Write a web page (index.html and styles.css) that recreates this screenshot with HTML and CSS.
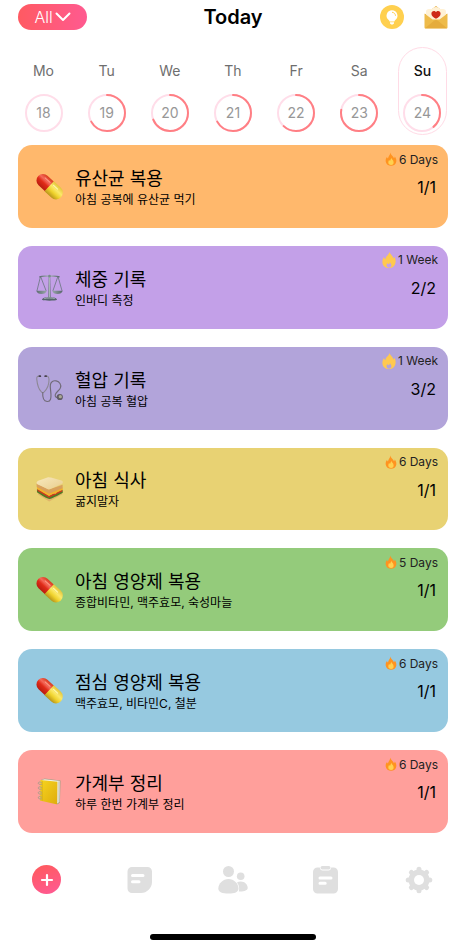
FILE: index.html
```html
<!DOCTYPE html>
<html lang="ko">
<head>
    <meta charset="UTF-8">
    <meta name="viewport" content="width=device-width, initial-scale=1.0">
    <title>Today</title>
    <link rel="stylesheet" href="styles.css">
</head>
<body>

<!-- shared icons -->
<svg class="sprite" aria-hidden="true">
    <defs>
        <linearGradient id="pillRed" x1="0" y1="0" x2="0" y2="1">
            <stop offset="0" stop-color="#d93a1c"/>
            <stop offset="0.35" stop-color="#f4695a"/>
            <stop offset="0.6" stop-color="#e02b18"/>
            <stop offset="1" stop-color="#b81c10"/>
        </linearGradient>
        <linearGradient id="pillYellow" x1="0" y1="0" x2="0" y2="1">
            <stop offset="0" stop-color="#e3c63c"/>
            <stop offset="0.35" stop-color="#fbe96a"/>
            <stop offset="0.65" stop-color="#efd22c"/>
            <stop offset="1" stop-color="#b8941a"/>
        </linearGradient>
        <linearGradient id="metal" x1="0" y1="0" x2="1" y2="0">
            <stop offset="0" stop-color="#5d6b70"/>
            <stop offset="0.5" stop-color="#a9b8b8"/>
            <stop offset="1" stop-color="#56646a"/>
        </linearGradient>
        <linearGradient id="bread" x1="0" y1="0" x2="1" y2="1">
            <stop offset="0" stop-color="#f8e9bd"/>
            <stop offset="1" stop-color="#e9cd8e"/>
        </linearGradient>
        <linearGradient id="cover" x1="0" y1="0" x2="1" y2="1">
            <stop offset="0" stop-color="#f6d51f"/>
            <stop offset="1" stop-color="#dfac0c"/>
        </linearGradient>
    </defs>
    <symbol id="pill" viewBox="0 0 28 28">
        <g transform="rotate(43 14 14)">
            <path d="M14 7.200H4.800a6.800 6.800 0 0 0 0 13.600H14z" fill="url(#pillRed)"/>
            <path d="M13.500 6.900h9.700a7.100 7.100 0 0 1 0 14.200h-9.700z" fill="url(#pillYellow)"/>
            <path d="M4.500 10.500h7" stroke="#ff9a88" stroke-width="1" stroke-linecap="round"/>
            <path d="M16 10.300h6" stroke="#fff8b4" stroke-width="1" stroke-linecap="round"/>
        </g>
    </symbol>
    <symbol id="flame" viewBox="0 0 12 14">
        <path d="M5.300.5c.4 2.800 2.900 3.400 3.700 5.700.5-.5.7-1 .8-1.700 1.300 1.600 1.700 3.300 1.500 4.900-.3 2.600-2.500 4.400-5.200 4.400S1 12 .7 9.400c-.2-2 .5-3.300 1.300-4.400.2.700.5 1.200 1 1.500C3.200 4.100 5.400 3 5.300.5z" fill="#ff9320"/>
        <path d="M6.400 5.800c.1 1.500 1.900 2.200 2.200 4.100.3 1.800-.8 3-2.500 3s-2.900-1-2.800-2.700c.1-1 .5-1.600.9-2.100.2.5.4.8.9 1 .1-1.300.9-1.900 1.300-3.300z" fill="#ffd150"/>
    </symbol>
    <symbol id="flameBig" viewBox="0 0 14 17">
        <path fill-rule="evenodd" d="M7.600.3c.3 2.600 3.300 3.600 3.700 6.600.6-.3.9-.9 1-1.700 1.100 1.500 1.500 3.500 1.300 5.300-.3 3.700-3.200 6.200-6.700 6.200S.6 14.600.4 11.100C.3 8.900.900 7 2 5.600c.2 1 .6 1.800 1.500 2.100C3.400 4.400 7.100 3.600 7.600.3zM8 10.800c-.1.900-.7 1.500-1.300 2-.7-.1-1-.6-1.100-1.200-.8.8-1.200 1.700-1 2.700.2 1.200 1.100 1.900 2.400 1.900s2.300-.8 2.400-2.100c.1-1.400-.9-2.100-1.400-3.300z" fill="#ffc94f"/>
    </symbol>
</svg>

<header>
    <button class="filter-btn" type="button">All
        <svg width="16" height="10" viewBox="0 0 16 10" fill="none" stroke="#fff" stroke-width="2" stroke-linecap="round" stroke-linejoin="round" aria-hidden="true"><path d="M1.500 1.500 8 8l6.500-6.500"/></svg>
    </button>
    <h1>Today</h1>
    <div class="header-icons">
        <button class="icon-btn" type="button" aria-label="Tips">
            <svg width="24" height="24" viewBox="0 0 24 24">
                <circle cx="12" cy="12" r="12" fill="#ffd04f"/>
                <path d="M12 5.300a5.400 5.400 0 0 0-3.300 9.700c.6.500.8.900.9 1.500h4.800c.1-.6.3-1 .9-1.500A5.400 5.400 0 0 0 12 5.300z" fill="#fff"/>
                <path d="M10 17.300h4v1.200l-1.200 1.100h-1.600L10 18.500z" fill="#fff"/>
                <path d="M12.400 7.300c1.700.2 2.900 1.400 3.100 3.100" fill="none" stroke="#ffd04f" stroke-width="1" stroke-linecap="round"/>
            </svg>
        </button>
        <button class="icon-btn" type="button" aria-label="Messages">
            <svg width="24" height="24" viewBox="0 0 24 24">
                <path d="M1 9.500 12 1l11 8.500V13H1z" fill="#e3a936"/>
                <path d="M2 6.500c0-1.500 1.200-2.500 3-2.500h3C9 2.700 10.300 2 12 2s3 .7 4 2h3c1.800 0 3 1 3 2.500V13l-10 5-10-5z" fill="#fff1d5"/>
                <path d="M12 13.700c-2.700-1.300-4.600-2.900-4.600-5C7.400 7 8.500 6 9.900 6c.9 0 1.700.4 2.100 1.100.4-.7 1.200-1.100 2.100-1.100 1.400 0 2.500 1 2.500 2.700 0 2.100-1.900 3.700-4.600 5z" fill="#ce2b18"/>
                <path d="M.5 8.500 8.500 14.500h7l8-6V22.500a1 1 0 0 1-1 1h-21a1 1 0 0 1-1-1z" fill="#eebb4a"/>
                <path d="m1 23.200 9-7.500c1.300-1 2.700-1 4 0l9 7.500z" fill="#e5ac3c"/>
            </svg>
        </button>
    </div>
</header>

<div class="week" id="week"></div>

<ul class="habits">
    <li class="habit orange">
        <svg class="habit-icon" viewBox="0 0 28 28"><use href="#pill"/></svg>
        <div class="habit-text">
            <h2>유산균 복용</h2>
            <p>아침 공복에 유산균 먹기</p>
        </div>
        <div class="habit-status">
            <span class="streak"><svg class="flame" viewBox="0 0 12 14"><use href="#flame"/></svg>6 Days</span>
            <span class="count">1/1</span>
        </div>
    </li>
    <li class="habit violet">
        <svg class="habit-icon" viewBox="0 0 28 28" fill="none">
            <path d="M4.500 3.200 1 17.500M5 3.200l5.500 14.300M22.500 3.200 17.500 17.500M23 3.200l4 14.300" stroke="#66747a" stroke-width=".8"/>
            <path d="M4 3c3-1.300 6-.4 9.700-.8C17.500 2.600 20.500 1.700 24 3" stroke="url(#metal)" stroke-width="1.300" stroke-linecap="round"/>
            <path d="M13.200 2h1.500l.5 23h-2.500z" fill="url(#metal)"/>
            <circle cx="14" cy="2.200" r="1.400" fill="#78888d"/>
            <path d="M.3 17.300h10.900c-.5 2-2.700 3.500-5.500 3.500S.8 19.300.3 17.300zM16.800 17.300h10.900c-.5 2-2.700 3.500-5.400 3.500-2.800 0-5-1.500-5.500-3.500z" fill="url(#metal)"/>
            <path d="M6.200 26.800c0-1.900 3.300-2.700 7.800-2.700s7.800.8 7.800 2.700c-2 1.200-13.600 1.200-15.600 0z" fill="#55646a"/>
            <path d="M8.500 25.400c3-.7 8-.7 11 0" stroke="#b7c4c6" stroke-width=".8"/>
        </svg>
        <div class="habit-text">
            <h2>체중 기록</h2>
            <p>인바디 측정</p>
        </div>
        <div class="habit-status">
            <span class="streak"><svg class="flame-big" viewBox="0 0 14 17"><use href="#flameBig"/></svg>1 Week</span>
            <span class="count">2/2</span>
        </div>
    </li>
    <li class="habit lavender">
        <svg class="habit-icon" viewBox="0 0 28 28" fill="none" stroke-linecap="round">
            <path d="M4 1.200C1.500.5.500 2 .8 4.500c.5 5 1 9.500 4.800 13 .9.900 2 .9 2.900 0 3.700-3.500 5-8 5-12.500 0-2.700-1-4.300-3.500-3.800" stroke="#8c8794" stroke-width="1.100"/>
            <path d="M7 18.300c-.3 4.500 1 8.800 4.500 9.200 4 .4 4.200-4 4-7.500-.3-5-1-7.500-.6-10 .5-3 3-4.600 6-3.900 3.600.8 5.500 4 4.500 7-.9 2.700-4.200 4.200-5.300 7-.6 1.700.3 3.400 2.400 3.400" stroke="#716b78" stroke-width="1.200"/>
            <path d="M3.500 1.200h1M9.500 1.200h1" stroke="#47414f" stroke-width="1.800"/>
            <circle cx="24.700" cy="22.800" r="3.200" fill="#5f5b63"/>
            <circle cx="25.200" cy="22.500" r="1.700" fill="#aaa897"/>
        </svg>
        <div class="habit-text">
            <h2>혈압 기록</h2>
            <p>아침 공복 혈압</p>
        </div>
        <div class="habit-status">
            <span class="streak"><svg class="flame-big" viewBox="0 0 14 17"><use href="#flameBig"/></svg>1 Week</span>
            <span class="count">3/2</span>
        </div>
    </li>
    <li class="habit yellow">
        <svg class="habit-icon" viewBox="0 0 28 28">
            <path d="m1.500 17 12 7.500L27.300 17v3l-13.600 7.500L2.500 20.500z" fill="#e0b469"/>
            <path d="M1 14.500 13.500 21.500 27.500 15.500l.3 2.800c-3 1.500-9.800 5.700-14.100 6.700C9 23.500 4.700 20.500 1 18z" fill="#4d7c26"/>
            <path d="m1.500 14 12 7.500L27.300 15v2l-13.800 6.500L1.500 16.500z" fill="#c93c20"/>
            <path d="m1 12 12.500 6.700L27.700 13v2.200l-6 3-1.700 1.600-1.500-.6-5 2.500L1 14.500z" fill="#f3b32b"/>
            <path d="M.5 8.500 13.200 15 27.600 10v3.700l-14.100 5.800L.8 12.500z" fill="#d9a05b"/>
            <path d="M.8 7.500c.5-1 1.700-1.500 3-2L12.500 2.400c1.200-.4 2 0 3 .3l10.900 2.900c1.700.5 2 2.700.7 3.400l-12.200 5.500c-1.300.6-2.400.4-3.500-.2L1.400 9.700C.6 9.200.4 8.300.8 7.500z" fill="url(#bread)"/>
        </svg>
        <div class="habit-text">
            <h2>아침 식사</h2>
            <p>굶지말자</p>
        </div>
        <div class="habit-status">
            <span class="streak"><svg class="flame" viewBox="0 0 12 14"><use href="#flame"/></svg>6 Days</span>
            <span class="count">1/1</span>
        </div>
    </li>
    <li class="habit green">
        <svg class="habit-icon" viewBox="0 0 28 28"><use href="#pill"/></svg>
        <div class="habit-text">
            <h2>아침 영양제 복용</h2>
            <p>종합비타민, 맥주효모, 숙성마늘</p>
        </div>
        <div class="habit-status">
            <span class="streak"><svg class="flame" viewBox="0 0 12 14"><use href="#flame"/></svg>5 Days</span>
            <span class="count">1/1</span>
        </div>
    </li>
    <li class="habit blue">
        <svg class="habit-icon" viewBox="0 0 28 28"><use href="#pill"/></svg>
        <div class="habit-text">
            <h2>점심 영양제 복용</h2>
            <p>맥주효모, 비타민C, 철분</p>
        </div>
        <div class="habit-status">
            <span class="streak"><svg class="flame" viewBox="0 0 12 14"><use href="#flame"/></svg>6 Days</span>
            <span class="count">1/1</span>
        </div>
    </li>
    <li class="habit pink">
        <svg class="habit-icon" viewBox="0 0 28 28">
            <path d="m5 2 4-1.400 16.500 2-.7 22.700-2.500 2.200z" fill="#a8a489"/>
            <path d="m6 2 3-.7 15.700 1.900-.5 21.500-2 1.700z" fill="#f1efe2"/>
            <path d="m23.300 3.500-.6 22M24.300 3.200l-.6 21.500" stroke="#b9b6a5" stroke-width=".5"/>
            <path d="M4.500 2 22.200 4l-.3 22.700c0 .5-.4.700-.9.600L5 23.700c-.6-.1-.8-.5-.8-1z" fill="url(#cover)"/>
            <path d="M6.500 3v20.500" stroke="#c99f10" stroke-width=".5"/>
            <path d="M6 5c-2-1.600-4-.7-3.600.7.300 1 2 1.100 3.600.9M6 10c-2-1.600-4-.7-3.600.7.300 1 2 1.100 3.600.9M6 15c-2-1.600-4-.7-3.600.7.300 1 2 1.100 3.600.9M6 20c-2-1.600-4-.7-3.600.7.300 1 2 1.100 3.600.9" fill="none" stroke="#a89c88" stroke-width="1"/>
        </svg>
        <div class="habit-text">
            <h2>가계부 정리</h2>
            <p>하루 한번 가계부 정리</p>
        </div>
        <div class="habit-status">
            <span class="streak"><svg class="flame" viewBox="0 0 12 14"><use href="#flame"/></svg>6 Days</span>
            <span class="count">1/1</span>
        </div>
    </li>
</ul>

<footer>
    <nav class="tabs">
        <button class="tab" type="button" aria-label="Add habit">
            <span class="add"><svg width="14" height="14" viewBox="0 0 14 14" stroke="#fff" stroke-width="2.200" stroke-linecap="round"><path d="M7 2v10M2 7h10"/></svg></span>
        </button>
        <button class="tab" type="button" aria-label="Notes">
            <svg width="30" height="30" viewBox="0 0 30 30" fill="#dfdfdf">
                <path d="M7 2h15.500A4.500 4.500 0 0 1 27 6.500V17c0 6-5 11-11 11H7a4.500 4.500 0 0 1-4.500-4.500v-17A4.500 4.500 0 0 1 7 2z"/>
                <path d="M7.500 10.600h10.500M7.500 16.800H14" stroke="#fff" stroke-width="3" stroke-linecap="round"/>
            </svg>
        </button>
        <button class="tab" type="button" aria-label="Friends">
            <svg width="30" height="30" viewBox="0 0 30 30" fill="#dfdfdf">
                <circle cx="10.500" cy="6.500" r="5.500"/>
                <path d="M.3 23.500C.3 18.500 5 14 10.500 14s10 4.500 10 9.500c0 3.700-4 5-10 5S.3 27.200.3 23.500z"/>
                <circle cx="22.700" cy="11.300" r="3.800"/>
                <path d="M19 17.500c1-.7 2.300-1 3.700-1 4 0 7 3 7 6.300 0 2.600-3 3.700-7.500 3.700-.5 0-1 0-1.400-.1.900-3 .3-6.300-1.800-8.900z"/>
            </svg>
        </button>
        <button class="tab" type="button" aria-label="Records">
            <svg width="30" height="30" viewBox="0 0 30 30" fill="#dfdfdf">
                <path d="M6.500 2.500h2.300C9 4.600 10.100 5.500 11.500 5.500h6c1.400 0 2.500-.9 2.700-3h2.300A4.500 4.500 0 0 1 27 7v17a4.500 4.500 0 0 1-4.500 4.500h-16A4.500 4.500 0 0 1 2 24V7a4.500 4.500 0 0 1 4.500-4.500z"/>
                <rect x="9.500" y="1" width="10" height="3.400" rx="1.700"/>
                <path d="M9 13h11M9 18.300h5.200" stroke="#fff" stroke-width="3" stroke-linecap="round"/>
            </svg>
        </button>
        <button class="tab" type="button" aria-label="Settings">
            <svg width="30" height="30" viewBox="0 0 30 30">
                <g stroke="#dfdfdf" stroke-width="5" stroke-linecap="round">
                    <path d="M15 4.200v21.600M4.200 15h21.600M7.400 7.400l15.200 15.200M22.600 7.400 7.400 22.600"/>
                </g>
                <circle cx="15" cy="15" r="10.500" fill="#dfdfdf"/>
                <circle cx="15" cy="15" r="5" fill="#fff"/>
            </svg>
        </button>
    </nav>
    <div class="home-bar"></div>
</footer>

<script>
const days = [
    { name: "Mo", date: 18, done: 0 },
    { name: "Tu", date: 19, done: 67 },
    { name: "We", date: 20, done: 69 },
    { name: "Th", date: 21, done: 67 },
    { name: "Fr", date: 22, done: 62 },
    { name: "Sa", date: 23, done: 78 },
    { name: "Su", date: 24, done: 39 }
];
const today = 24;

const week = document.getElementById("week");
days.forEach((day) => {
    const btn = document.createElement("button");
    btn.type = "button";
    btn.className = day.date === today ? "day selected" : "day";
    const arc = day.done > 0
        ? `<circle class="arc" cx="19" cy="19" r="18" pathLength="100" stroke-dasharray="${day.done} 100"/>`
        : "";
    btn.innerHTML = `
        <span class="day-name">${day.name}</span>
        <span class="ring">
            <svg viewBox="0 0 38 38"><circle class="track" cx="19" cy="19" r="18"/>${arc}</svg>
            <span class="date">${day.date}</span>
        </span>`;
    week.appendChild(btn);
});
</script>

</body>
</html>
```
FILE: styles.css
```css
* {
    box-sizing: border-box;
}
body {
    font-family: Inter, "Noto Sans CJK KR", sans-serif;
    background-color: #fff;
    color: #000;
    margin: 0;
    min-height: 100vh;
    display: flex;
    flex-direction: column;
}
button {
    font-family: inherit;
    background: none;
    border: none;
    padding: 0;
    cursor: pointer;
}
svg {
    display: block;
    flex-shrink: 0;
    overflow: visible;
}
h1, h2, p {
    margin: 0;
}
.sprite {
    position: absolute;
    width: 0;
    height: 0;
}
header {
    display: grid;
    grid-template-columns: 1fr auto 1fr;
    align-items: center;
    height: 34px;
    padding: 0 18px;
}
.filter-btn {
    display: flex;
    align-items: center;
    justify-content: center;
    gap: 2px;
    justify-self: start;
    width: 69px;
    height: 26px;
    border-radius: 13px;
    background: linear-gradient(90deg, #ff5a62, #ff5a90);
    color: #fff;
    font-size: 16px;
    font-weight: 300;
}
h1 {
    font-size: 20px;
    font-weight: 600;
}
.header-icons {
    display: flex;
    justify-content: flex-end;
    gap: 20px;
}
.week {
    display: flex;
    justify-content: space-between;
    margin: 13px 19px 10px;
}
.day {
    display: flex;
    flex-direction: column;
    align-items: center;
    gap: 13px;
    width: 49px;
    height: 88px;
    padding-top: 13px;
    border: 1px solid transparent;
    border-radius: 25px;
    color: #6e6e6e;
}
.day.selected {
    border-color: #ffdbe6;
}
.day-name {
    font-size: 14px;
    line-height: 20px;
}
.selected .day-name {
    color: #111;
    font-weight: 500;
}
.ring {
    display: grid;
    place-items: center;
    width: 38px;
    height: 38px;
}
.ring svg {
    width: 38px;
    height: 38px;
    grid-area: 1 / 1;
    transform: rotate(-90deg);
}
.ring circle {
    fill: none;
    stroke-width: 2;
}
.track {
    stroke: #ffdde9;
}
.ring .arc {
    stroke: #ff7f84;
    stroke-linecap: round;
}
.date {
    grid-area: 1 / 1;
    font-size: 14px;
    line-height: 18px;
    color: #979797;
}
.habits {
    flex: 1;
    display: grid;
    grid-auto-rows: 1fr;
    gap: 18px;
    list-style: none;
    margin: 0;
    padding: 0 18px;
}
.habit {
    display: flex;
    align-items: center;
    gap: 12px;
    padding: 0 10px 0 18px;
    border-radius: 14px;
}
.orange { background-color: #ffb86c; }
.violet { background-color: #c3a0e8; }
.lavender { background-color: #b2a4da; }
.yellow { background-color: #e8d273; }
.green { background-color: #94cb7b; }
.blue { background-color: #96c9e0; }
.pink { background-color: #ff9f9b; }
.habit-icon {
    width: 27px;
    height: 27px;
}
.habit-text {
    flex: 1;
    padding-top: 3px;
}
.habit-text h2 {
    font-size: 18px;
    font-weight: 400;
    line-height: 24px;
}
.habit-text p {
    font-size: 12px;
    line-height: 18px;
}
.habit-status {
    align-self: stretch;
    display: flex;
    flex-direction: column;
    align-items: flex-end;
    padding-top: 5px;
}
.streak {
    display: flex;
    align-items: center;
    gap: 2px;
    height: 18px;
    font-size: 12px;
    color: #222;
}
.flame {
    width: 12px;
    height: 14px;
}
.flame-big {
    width: 14px;
    height: 18px;
}
.count {
    margin: 8px 2px 0 0;
    font-size: 16px;
    line-height: 22px;
}
footer {
    display: flex;
    flex-direction: column;
    align-items: center;
    height: 116px;
    padding: 32px 0 9px;
}
.tabs {
    display: flex;
    width: 100%;
}
.tab {
    flex: 1;
    display: flex;
    justify-content: center;
}
.add {
    display: grid;
    place-items: center;
    width: 29px;
    height: 29px;
    border-radius: 50%;
    background: linear-gradient(160deg, #ff5a5a, #ff5a96);
}
.home-bar {
    width: 166px;
    height: 6px;
    margin-top: auto;
    border-radius: 3px;
    background-color: #000;
}
```
